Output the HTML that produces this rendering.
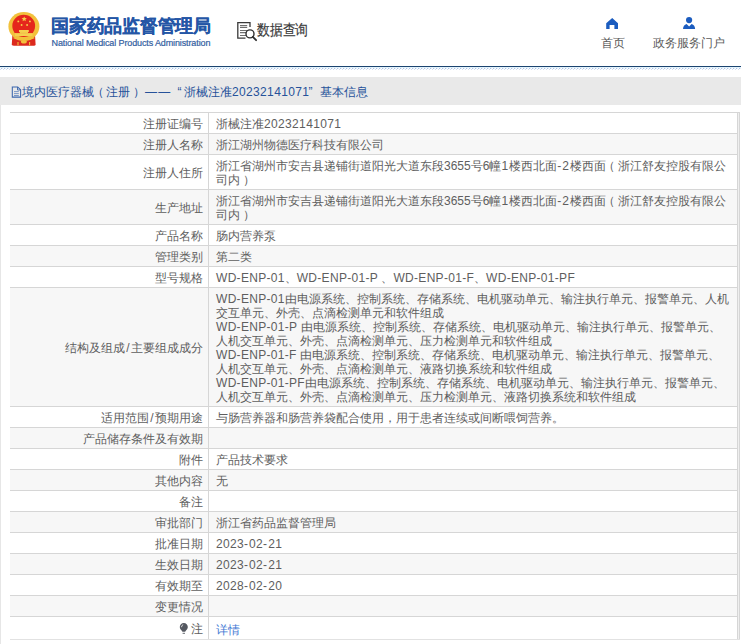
<!DOCTYPE html>
<html><head><meta charset="utf-8">
<style>
*{margin:0;padding:0;box-sizing:border-box}
html,body{width:741px;height:644px;overflow:hidden;background:#fff;font-family:"Liberation Sans",sans-serif;}
.abs{position:absolute;white-space:nowrap}
#title{left:51px;top:13.5px;font-size:17.6px;letter-spacing:-0.25px;font-weight:bold;color:#2456a6;-webkit-text-stroke:0.2px #2456a6;line-height:24px;}
#entitle{left:51.5px;top:38px;font-size:9px;color:#33609f;-webkit-text-stroke:0.2px #33609f;line-height:10px;letter-spacing:-0.12px}
#sjcxt{left:257px;top:19.5px;font-size:15px;color:#3a3a3a;-webkit-text-stroke:0.2px #3a3a3a;line-height:20px;transform:scaleX(0.855);transform-origin:0 0}
.nav{font-size:12px;color:#5a5a5a;line-height:14px}
#line1{left:0;top:66px;width:741px;height:1px;background:#1c4470}
#line1b{left:0;top:67px;width:741px;height:1px;background:#e2f3fb}
#line2{left:0;top:68px;width:741px;height:1px;background:repeating-linear-gradient(90deg,#fff 0 1px,#aac2e8 1px 2px,#e6eef8 2px 3px)}
#line3{left:0;top:69px;width:741px;height:1px;background:repeating-linear-gradient(90deg,#d2deef 0 1px,#fff 1px 3px)}
#band{left:0;top:77px;width:741px;height:28px;background:#e9e9e9}
.cr{top:84px;font-size:12px;color:#26529a;line-height:16px}
#lstrip{left:0;top:105px;width:1px;height:539px;background:#e6e6e6}
#tbl{position:absolute;left:10px;top:113px;width:728px;font-size:12px;color:#5e5e5e}
.r{display:flex;border-bottom:1px solid #d6d6d6;}
.r:nth-child(even){background:#f7f7f7}
.l{width:199px;text-align:right;border-right:1px solid #d6d6d6;padding:4px 5px 2px 0;line-height:14px;display:flex;align-items:center;justify-content:flex-end}
.v{flex:1;padding:4px 0 2px 7px;line-height:14px;white-space:nowrap}
.n{letter-spacing:0.3px}
#rb{left:739px;top:112px;width:1px;height:528px;background:#d6d6d6}
#rbm{left:738px;top:113px;width:1px;height:526px;background:#efefef}
#rb2{left:737px;top:112px;width:1px;height:528px;background:#d6d6d6}
#tbt{left:10px;top:112px;width:730px;height:1px;background:#d6d6d6}
#tbb{left:10px;top:639px;width:730px;height:1px;background:#e2e2e2}
a{color:#4479d4;text-decoration:none}
</style></head>
<body>
<svg class="abs" style="left:0;top:0" width="46" height="50" viewBox="0 0 46 50">
  <path d="M12.4 35 L11.8 44.2 Q12 45.8 14 45.8 L33.8 45.8 Q35.6 45.8 35.6 44.2 L35 35 Z" fill="#dc2a1e"/>
  <ellipse cx="23.9" cy="26.4" rx="15.5" ry="14.3" fill="#f2c13c"/>
  <ellipse cx="23.7" cy="25.9" rx="11.4" ry="11.2" fill="#e5261c"/>
  <path d="M24.2 16.4l0.75 1.7 1.85 0.15-1.4 1.2 0.45 1.8-1.65-1-1.65 1 0.45-1.8-1.4-1.2 1.85-0.15z" fill="#f5cf4a"/>
  <circle cx="18.3" cy="21.4" r="0.95" fill="#f5cf4a"/>
  <circle cx="29.9" cy="21.4" r="0.95" fill="#f5cf4a"/>
  <circle cx="21.6" cy="25" r="0.95" fill="#f5cf4a"/>
  <circle cx="27.1" cy="25" r="0.95" fill="#f5cf4a"/>
  <rect x="19" y="30" width="9.8" height="2" fill="#f5d050"/>
  <rect x="19.8" y="32" width="8.2" height="1.2" fill="#f3c94a"/>
  <rect x="15" y="33.1" width="17.6" height="2.9" fill="#f5d050"/>
  <path d="M13.5 37.6 Q23.9 42.5 34.3 37.6" fill="none" stroke="#f2c13c" stroke-width="1.4"/>
  <ellipse cx="23.9" cy="41.8" rx="3" ry="1.8" fill="#f2c13c"/>
  <path d="M18 42v3.3M29.6 42v3.3" stroke="#f2c13c" stroke-width="1.1"/>
</svg>
<div id="title" class="abs">国家药品监督管理局</div>
<div id="entitle" class="abs">National Medical Products Administration</div>
<svg class="abs" style="left:236px;top:21px" width="22" height="21" viewBox="0 0 22 21">
  <path d="M9.5 17.2H1.8V1.6H14V6" fill="none" stroke="#3a3a3a" stroke-width="1.3"/>
  <path d="M4 4.6h7.2M4 6.4h7.2M4 9.5h7.2M4 11.6h7.2M4 14.4h7.2" stroke="#6e6e6e" stroke-width="1.05"/>
  <circle cx="14" cy="12.9" r="4" fill="#fff" stroke="#2e2e2e" stroke-width="1.4"/>
  <path d="M16.8 15.8l3.3 3.4" stroke="#2e2e2e" stroke-width="1.8" stroke-linecap="round"/>
</svg>
<div id="sjcxt" class="abs">数据查询</div>
<svg class="abs" style="left:606px;top:18px" width="13" height="11" viewBox="0 0 13 11"><path d="M6.2 0L0.2 5.2V11H3.6V7H8.4V11H12V5.2Z" fill="#1b5cbf"/></svg>
<div class="abs nav" style="left:601px;top:36px">首页</div>
<svg class="abs" style="left:683px;top:17px" width="13" height="13" viewBox="0 0 13 13"><circle cx="6.1" cy="3.1" r="3.1" fill="#1b5cbf"/><path d="M0 12.1Q0.2 8 3.6 7L6.1 9.5 8.6 7Q12 8 12.1 12.1Z" fill="#1b5cbf"/></svg>
<div class="abs nav" style="left:653px;top:36px">政务服务门户</div>
<div id="line1" class="abs"></div>
<div id="line1b" class="abs"></div>
<div id="line2" class="abs"></div>
<div id="line3" class="abs"></div>
<div id="band" class="abs"></div>
<svg class="abs" style="left:11px;top:86px" width="11" height="12" viewBox="0 0 11 12"><path d="M1.3 0.9h5.4l2.9 2.9v7.3H1.3Z" fill="none" stroke="#3a66ad" stroke-width="1.05"/><path d="M6.5 1v3h3" fill="none" stroke="#3a66ad" stroke-width="0.9"/><path d="M3 5.6h4.8M3 7.6h4.8M3 9.5h4.8" stroke="#5a80bb" stroke-width="0.8"/></svg>
<div class="abs cr" style="left:22px">境内医疗器械<span style="position:relative;left:-2.5px">（</span>注册<span style="position:relative;left:3px">）</span></div>
<div class="abs cr" style="left:145px;letter-spacing:1.2px">——</div>
<div class="abs cr" style="left:177.5px">“</div>
<div class="abs cr" style="left:184px">浙械注准<span style="letter-spacing:0.35px">20232141071</span></div>
<div class="abs cr" style="left:308.5px">”</div>
<div class="abs cr" style="left:320px">基本信息</div>
<div id="lstrip" class="abs"></div>
<div id="tbl">
<div class="r" style="height:21px"><div class="l">注册证编号</div><div class="v">浙械注准<span class="n" style="letter-spacing:0.35px">20232141071</span></div></div>
<div class="r" style="height:21px"><div class="l">注册人名称</div><div class="v">浙江湖州物德医疗科技有限公司</div></div>
<div class="r" style="height:35px"><div class="l">注册人住所</div><div class="v">浙江省湖州市安吉县递铺街道阳光大道东段3655号6幢<span style="letter-spacing:1.2px">1</span>楼西北面<span style="letter-spacing:0.9px">-2</span>楼西面<span style="position:relative;left:-2.5px">（</span>浙江舒友控股有限公<br>司内<span style="position:relative;left:3px">）</span></div></div>
<div class="r" style="height:35px"><div class="l">生产地址</div><div class="v">浙江省湖州市安吉县递铺街道阳光大道东段3655号6幢<span style="letter-spacing:1.2px">1</span>楼西北面<span style="letter-spacing:0.9px">-2</span>楼西面<span style="position:relative;left:-2.5px">（</span>浙江舒友控股有限公<br>司内<span style="position:relative;left:3px">）</span></div></div>
<div class="r" style="height:21px"><div class="l">产品名称</div><div class="v">肠内营养泵</div></div>
<div class="r" style="height:21px"><div class="l">管理类别</div><div class="v">第二类</div></div>
<div class="r" style="height:21px"><div class="l">型号规格</div><div class="v"><span class="n">WD-ENP-01</span>、<span class="n">WD-ENP-01-P </span>、<span class="n">WD-ENP-01-F</span>、<span class="n">WD-ENP-01-PF</span></div></div>
<div class="r" style="height:119px"><div class="l">结构及组成<span style="padding:0 1.5px">/</span>主要组成成分</div><div class="v"><span class="n">WD-ENP-01</span>由电源系统、控制系统、存储系统、电机驱动单元、输注执行单元、报警单元、人机<br>交互单元、外壳、点滴检测单元和软件组成<br><span class="n">WD-ENP-01-P </span>由电源系统、控制系统、存储系统、电机驱动单元、输注执行单元、报警单元、<br>人机交互单元、外壳、点滴检测单元、压力检测单元和软件组成<br><span class="n">WD-ENP-01-F </span>由电源系统、控制系统、存储系统、电机驱动单元、输注执行单元、报警单元、<br>人机交互单元、外壳、点滴检测单元、液路切换系统和软件组成<br><span class="n">WD-ENP-01-PF</span>由电源系统、控制系统、存储系统、电机驱动单元、输注执行单元、报警单元、<br>人机交互单元、外壳、点滴检测单元、压力检测单元、液路切换系统和软件组成</div></div>
<div class="r" style="height:21px"><div class="l">适用范围<span style="padding:0 1.5px">/</span>预期用途</div><div class="v">与肠营养器和肠营养袋配合使用，用于患者连续或间断喂饲营养。</div></div>
<div class="r" style="height:21px"><div class="l">产品储存条件及有效期</div><div class="v"></div></div>
<div class="r" style="height:21px"><div class="l">附件</div><div class="v">产品技术要求</div></div>
<div class="r" style="height:21px"><div class="l">其他内容</div><div class="v">无</div></div>
<div class="r" style="height:21px"><div class="l">备注</div><div class="v"></div></div>
<div class="r" style="height:21px"><div class="l">审批部门</div><div class="v">浙江省药品监督管理局</div></div>
<div class="r" style="height:21px"><div class="l">批准日期</div><div class="v"><span class="n" style="letter-spacing:0.32px">2023<span style="letter-spacing:1.1px">-</span>02<span style="letter-spacing:1.1px">-</span>21</span></div></div>
<div class="r" style="height:21px"><div class="l">生效日期</div><div class="v"><span class="n" style="letter-spacing:0.32px">2023<span style="letter-spacing:1.1px">-</span>02<span style="letter-spacing:1.1px">-</span>21</span></div></div>
<div class="r" style="height:21px"><div class="l">有效期至</div><div class="v"><span class="n" style="letter-spacing:0.32px">2028<span style="letter-spacing:1.1px">-</span>02<span style="letter-spacing:1.1px">-</span>20</span></div></div>
<div class="r" style="height:21px"><div class="l">变更情况</div><div class="v"></div></div>
<div class="r" style="height:22px;border-bottom:none"><div class="l" style="padding-top:3px">注</div><div class="v" style="padding-top:6px"><a>详情</a></div></div>
</div>
<svg class="abs" style="left:179px;top:622px" width="10" height="13" viewBox="0 0 10 13"><path d="M4.8 0.9C2.5 0.9 0.8 2.6 0.8 4.9 0.8 6.5 1.7 7.6 2.6 8.4 3.1 8.9 3.3 9.3 3.4 9.8H6.2C6.3 9.3 6.5 8.9 7 8.4 7.9 7.6 8.8 6.5 8.8 4.9 8.8 2.6 7.1 0.9 4.8 0.9Z" fill="#545860"/><path d="M3.6 11.3h2.4" stroke="#545860" stroke-width="0.9"/><path d="M2.5 5.2Q2.6 3.3 4.2 2.6" fill="none" stroke="#e4e4e4" stroke-width="0.9"/></svg>
<div id="rb2" class="abs"></div>
<div id="rbm" class="abs"></div>
<div id="rb" class="abs"></div>
<div id="tbb" class="abs"></div>
<div id="tbt" class="abs"></div>
</body></html>
